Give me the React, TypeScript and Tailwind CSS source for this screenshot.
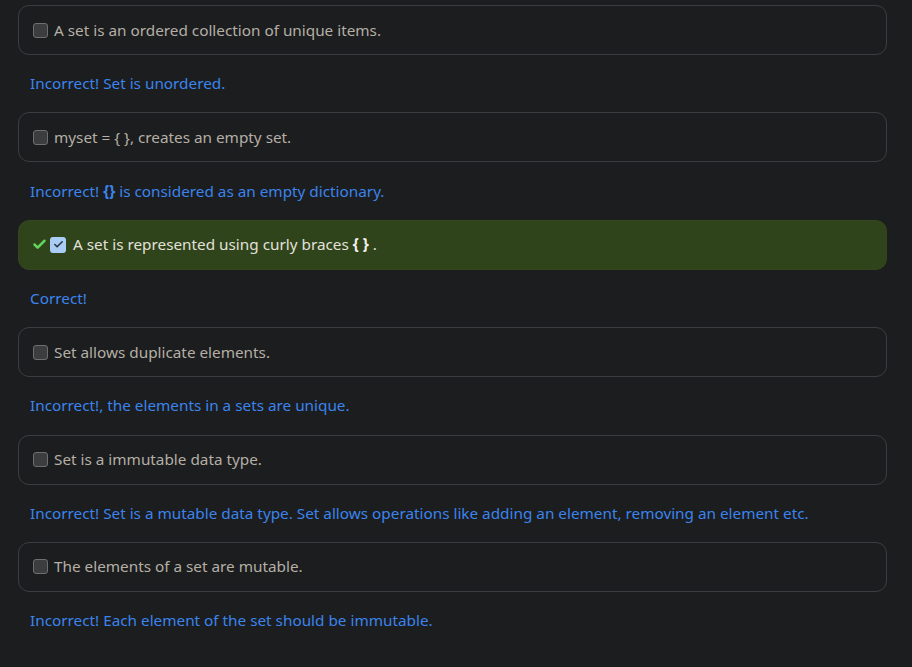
import { Check } from 'lucide-react';

type Option = {
  text: React.ReactNode;
  feedback: React.ReactNode;
  correct?: boolean;
};

const options: Option[] = [
  {
    text: 'A set is an ordered collection of unique items.',
    feedback: 'Incorrect! Set is unordered.',
  },
  {
    text: 'myset = { }, creates an empty set.',
    feedback: (
      <>
        Incorrect! <b className="font-bold">{'{}'}</b> is considered as an empty dictionary.
      </>
    ),
  },
  {
    text: (
      <>
        A set is represented using curly braces <b className="font-bold text-[#f2f0ec]">{'{ }'}</b> .
      </>
    ),
    feedback: 'Correct!',
    correct: true,
  },
  {
    text: 'Set allows duplicate elements.',
    feedback: 'Incorrect!, the elements in a sets are unique.',
  },
  {
    text: 'Set is a immutable data type.',
    feedback:
      'Incorrect! Set is a mutable data type. Set allows operations like adding an element, removing an element etc.',
  },
  {
    text: 'The elements of a set are mutable.',
    feedback: 'Incorrect! Each element of the set should be immutable.',
  },
];

function Box({ checked }: { checked?: boolean }) {
  if (checked) {
    return (
      <span className="flex h-[16px] w-[16px] items-center justify-center rounded-[3px] bg-[#a9cdf5]">
        <Check size={11} strokeWidth={3.5} className="text-[#2d3742]" />
      </span>
    );
  }
  return (
    <span className="h-[15px] w-[15px] rounded-[3px] border border-[#6e6e6e] bg-[#3b3d3f]" />
  );
}

export default function App() {
  return (
    <div
      className="min-h-screen bg-[#1b1d1f] pl-[18px] pr-[25px] pt-[5px]"
      style={{ fontFamily: '"Noto Sans", "Open Sans", sans-serif' }}
    >
      {options.map((opt, i) => (
        <div key={i}>
          <div
            className={
              opt.correct
                ? 'flex h-[50px] items-center gap-[7px] rounded-[11px] border border-[#35451f] bg-[#2f441b] pl-[13px] text-[15.3px] text-[#e3e0da]'
                : 'flex h-[50px] items-center gap-[6px] rounded-[11px] border border-[#3b3e41] bg-[#1b1d1f] pl-[14px] text-[15.3px] text-[#b5afa5]'
            }
          >
            {opt.correct && (
              <Check size={15} strokeWidth={4} className="-mr-[4px] text-[#5fd55a]" />
            )}
            <Box checked={opt.correct} />
            <span>{opt.text}</span>
          </div>
          <p className="py-[18.2px] pl-[12px] text-[15.3px] leading-[21px] text-[#3c84ec]">
            {opt.feedback}
          </p>
        </div>
      ))}
    </div>
  );
}
